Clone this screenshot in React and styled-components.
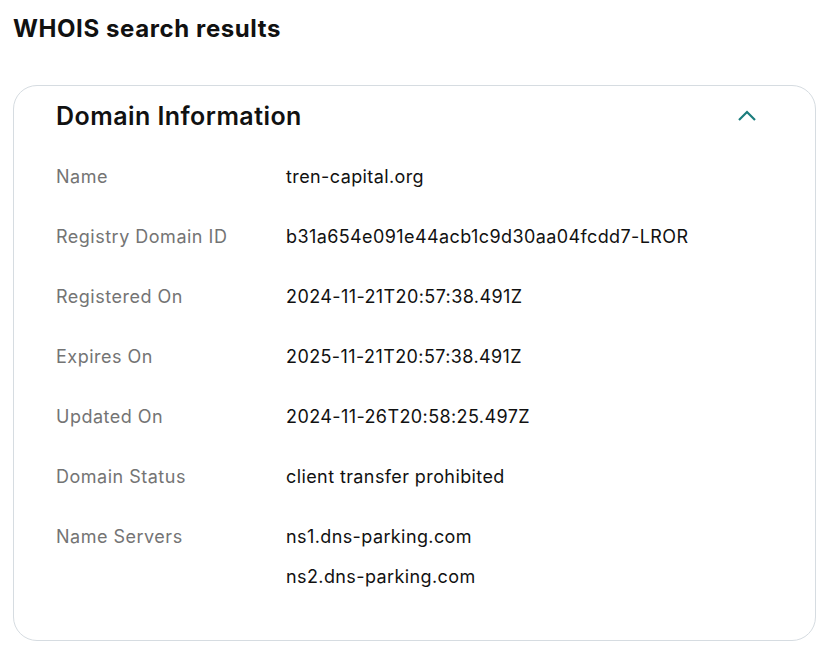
import React from "react";
import styled, { createGlobalStyle } from "styled-components";

const GlobalStyle = createGlobalStyle`
  html, body {
    margin: 0;
    padding: 0;
    background: #ffffff;
  }
  body {
    font-family: Inter, "Noto Sans", "Liberation Sans", sans-serif;
    color: #111111;
  }
`;

const rows = [
  { label: "Name", values: ["tren-capital.org"] },
  { label: "Registry Domain ID", values: ["b31a654e091e44acb1c9d30aa04fcdd7-LROR"] },
  { label: "Registered On", values: ["2024-11-21T20:57:38.491Z"] },
  { label: "Expires On", values: ["2025-11-21T20:57:38.491Z"] },
  { label: "Updated On", values: ["2024-11-26T20:58:25.497Z"] },
  { label: "Domain Status", values: ["client transfer prohibited"] },
  { label: "Name Servers", values: ["ns1.dns-parking.com", "ns2.dns-parking.com"] },
];

export default function App() {
  return (
    <Page>
      <GlobalStyle />
      <Title>WHOIS search results</Title>
      <Card>
        <Header>
          <CardTitle>Domain Information</CardTitle>
          <Toggle aria-label="Collapse">
            <svg width="22" height="22" viewBox="0 0 22 22" fill="none">
              <polyline
                points="3,15 11,7 19,15"
                stroke="#1b7d7d"
                strokeWidth="2.2"
                strokeLinecap="butt"
                strokeLinejoin="miter"
              />
            </svg>
          </Toggle>
        </Header>
        <List>
          {rows.map((row) => (
            <Row key={row.label}>
              <Label>{row.label}</Label>
              <Values>
                {row.values.map((v) => (
                  <Value key={v}>{v}</Value>
                ))}
              </Values>
            </Row>
          ))}
        </List>
      </Card>
    </Page>
  );
}

const Page = styled.div`
  padding: 13px 0 0 13px;
`;

const Title = styled.h1`
  margin: 0;
  font-size: 24px;
  line-height: 32px;
  font-weight: 700;
  letter-spacing: 0.6px;
`;

const Card = styled.section`
  box-sizing: border-box;
  width: 803px;
  margin-top: 40px;
  padding: 0 42px 34px;
  border: 1px solid #d6dce1;
  border-radius: 24px;
`;

const Header = styled.div`
  display: flex;
  align-items: center;
  justify-content: space-between;
  height: 60px;
`;

const CardTitle = styled.h2`
  margin: 0;
  font-size: 25px;
  font-weight: 600;
  line-height: 34px;
  letter-spacing: 0.45px;
`;

const Toggle = styled.button`
  display: flex;
  align-items: center;
  justify-content: center;
  margin-right: 15px;
  padding: 0;
  border: none;
  background: none;
  cursor: pointer;
`;

const List = styled.dl`
  margin: 0;
`;

const Row = styled.div`
  display: grid;
  grid-template-columns: 230px 1fr;
  padding: 19px 0 17px;
  font-size: 18px;
  line-height: 24px;
`;

const Label = styled.dt`
  color: #747474;
  letter-spacing: 0.5px;
`;

const Values = styled.dd`
  margin: 0;
  display: flex;
  flex-direction: column;
  gap: 16px;
`;

const Value = styled.span`
  color: #111111;
  letter-spacing: 0.4px;
`;
